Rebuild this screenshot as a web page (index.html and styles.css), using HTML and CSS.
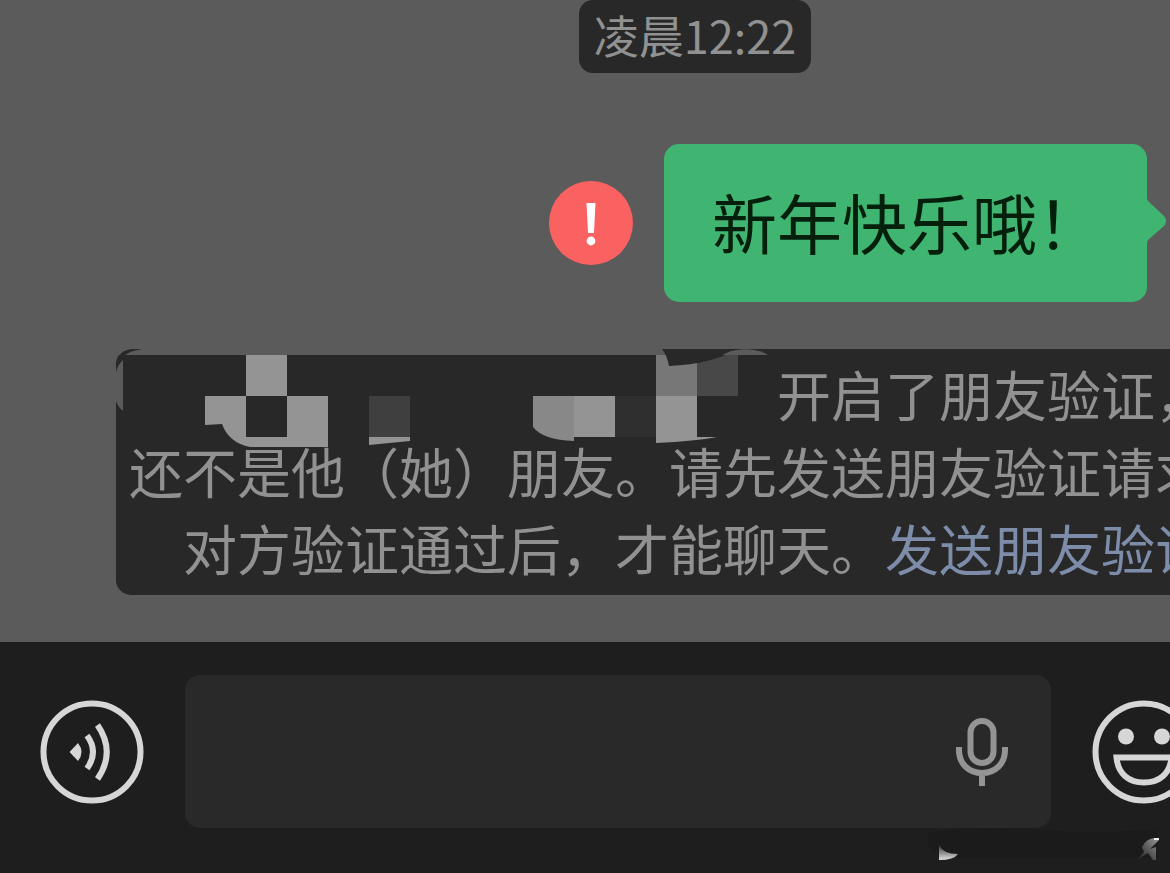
FILE: index.html
```html
<!DOCTYPE html>
<html lang="zh-CN">
<head>
<meta charset="utf-8">
<meta name="viewport" content="width=device-width, initial-scale=1">
<title>聊天</title>
<link rel="stylesheet" href="styles.css">
</head>
<body>
<main class="chat">
  <time class="stamp">凌晨12:22</time>

  <section class="message">
    <button class="retry" type="button" aria-label="重新发送">
      <svg viewBox="0 0 84 84" aria-hidden="true">
        <circle cx="42" cy="42" r="42" fill="#fa6262"/>
        <path d="M37.500 22h9l-1.500 30h-6z" fill="#fff"/>
        <circle cx="42" cy="60" r="4.400" fill="#fff"/>
      </svg>
    </button>
    <p class="bubble">新年快乐哦！
      <svg class="tail" viewBox="0 0 20 48" aria-hidden="true"><path d="M0 1L1 3L17 18Q21 23 17 28L1 42L0 45z" fill="#40b572"/></svg>
    </p>
  </section>

  <section class="notice">
    <svg class="mosaic" viewBox="0 0 660 96" aria-hidden="true">
      <path d="M14 0H546L552 6H0V0z" fill="#5b5b5b"/>
      <path d="M0 18Q1 0 18 0L26 0Q14 2 9 6L7 10Q2 15 0 24z" fill="#282828"/>
      <path d="M0 23Q2 15 7 11V62Q2 58 0 52z" fill="#5b5b5b"/>
      <path d="M130 6h41v41h41v51L134 98Q113 94 106 75L89 76V47h41z" fill="#949494"/>
      <path d="M130 47h41v41h-41z" fill="#282828"/>
      <path d="M253 47h41v41h-41z" fill="#3f3f3f"/>
      <path d="M253 88h41v4l-41 4z" fill="#949494"/>
      <path d="M417 47h41v45Q427 91 417 78z" fill="#888"/>
      <path d="M458 47h41v41h-41z" fill="#949494"/>
      <path d="M499 47h41v41h-41z" fill="#2f2f2f"/>
      <path d="M540 6h41v41h-41z" fill="#777"/>
      <path d="M581 6h41v41h-41z" fill="#484848"/>
      <path d="M540 47h41v41h20Q580 92 540 94z" fill="#949494"/>
      <path d="M546 0h76Q596 15 553 17Q551 6 546 0z" fill="#282828"/>
      <path d="M615 2Q637-3 652 6H606z" fill="#5b5b5b"/>
    </svg>
    <p class="lines">
      <span class="line"><span class="name"></span>开启了朋友验证，你</span>
      <span class="line">还不是他（她）朋友。请先发送朋友验证请求，</span>
      <span class="line">对方验证通过后，才能聊天。<a class="link" href="#verify">发送朋友验证</a></span>
    </p>
  </section>
</main>

<footer class="bar">
  <button class="round" type="button" aria-label="语音">
    <svg viewBox="0 0 104 104" fill="none" stroke="#d6d6d6" stroke-width="6" aria-hidden="true">
      <circle cx="52" cy="52" r="48.500"/>
      <path d="M29.500 52L38 43Q45 52 38 61z" fill="#d6d6d6" stroke="none"/>
      <path d="M47 35.500Q59 52 47 68.500"/>
      <path d="M57.500 25Q76 52 57.500 79"/>
    </svg>
  </button>
  <div class="field">
    <input class="text" type="text" aria-label="消息">
    <button class="mic" type="button" aria-label="语音输入">
      <svg viewBox="0 0 52 70" fill="none" stroke="#949494" stroke-width="6" aria-hidden="true">
        <rect x="14.500" y="4" width="23" height="42" rx="11.500"/>
        <path d="M3 30v3c0 14 10 23 23 23s23-9 23-23v-3M26 56v13"/>
      </svg>
    </button>
  </div>
  <button class="round" type="button" aria-label="表情">
    <svg viewBox="0 0 104 104" fill="none" stroke="#d6d6d6" stroke-width="6" aria-hidden="true">
      <circle cx="52" cy="52" r="48.500"/>
      <circle cx="34" cy="36.500" r="8" fill="#d6d6d6" stroke="none"/>
      <circle cx="70" cy="36.500" r="8" fill="#d6d6d6" stroke="none"/>
      <path d="M24.500 57.500h55C78 74 67 82.500 52 82.500S26 74 24.500 57.500z"/>
    </svg>
  </button>
  <svg class="smudge" viewBox="0 0 250 48" aria-hidden="true">
    <defs>
      <linearGradient id="glow" x1="0" y1="0" x2="0" y2="1"><stop offset="0" stop-color="#333"/><stop offset="1" stop-color="#e0e0e0"/></linearGradient>
      <linearGradient id="glint" x1="0" y1="1" x2="1" y2="0"><stop offset="0" stop-color="#1e1e1e"/><stop offset="1" stop-color="#999"/></linearGradient>
    </defs>
    <path d="M8 8Q60 0 120 5T238 4V33H40Q4 34 8 8z" fill="#1b1b1b"/>
    <path d="M19 20Q23 29 38 29Q34 35 19 35z" fill="url(#glow)"/>
    <path d="M222 22Q226 14 234 13L239 15L230 24L236 22V35H233L228 28L217 35L224 27z" fill="url(#glint)"/>
    <path d="M234 13h5v2h-5z" fill="#eee"/>
  </svg>
</footer>
</body>
</html>
```
FILE: styles.css
```css
* {
  box-sizing: border-box;
}

body {
  margin: 0;
  min-height: 100vh;
  display: flex;
  flex-direction: column;
  overflow: hidden;
  background: #5b5b5b;
  color: #919191;
  font-family: "Noto Sans CJK SC", sans-serif;
  font-weight: 400;
}

button {
  flex: none;
  padding: 0;
  border: 0;
  background: none;
}

svg {
  display: block;
}

.chat {
  flex: 1;
  display: flex;
  flex-direction: column;
  padding-left: 116px;
}

.stamp {
  align-self: center;
  margin-left: 104px;
  padding: 0 15px 4px;
  border-radius: 14px;
  background: #282828;
  font-size: 45px;
  line-height: 69px;
}

.message {
  display: flex;
  align-items: center;
  justify-content: flex-end;
  gap: 31px;
  margin-top: 71px;
  padding-right: 23px;
}

.retry {
  width: 84px;
}

.bubble {
  position: relative;
  margin: 0;
  padding: 29px 45px 33px 48px;
  border-radius: 15px;
  background: #40b572;
  color: #041f0b;
  font-size: 65px;
  line-height: 96px;
}

.tail {
  position: absolute;
  left: 100%;
  top: 54px;
  width: 20px;
}

.notice {
  position: relative;
  margin: 47px -106px 47px 0;
  padding: 6px 0 9px;
  border-radius: 15px;
  background: #282828;
}

.mosaic {
  position: absolute;
  left: 0;
  top: 0;
  width: 660px;
  overflow: visible;
}

.lines {
  position: relative;
  margin: 0;
  font-size: 54px;
  line-height: 77px;
  text-align: center;
}

.line {
  display: block;
  white-space: nowrap;
}

.name {
  display: inline-block;
  width: 12em;
}

.link {
  color: #7c8ca9;
  text-decoration: none;
}

.bar {
  position: relative;
  display: flex;
  align-items: center;
  gap: 41px;
  padding: 33px 0 45px 40px;
  margin-right: -26px;
  background: #1e1e1e;
}

.round {
  width: 104px;
}

.field {
  flex: 1;
  display: flex;
  align-items: center;
  padding-right: 43px;
  border-radius: 15px;
  background: #292929;
}

.text {
  flex: 1;
  min-width: 0;
  height: 153px;
  padding: 0 32px;
  border: 0;
  outline: 0;
  background: none;
  color: #d6d6d6;
  font: inherit;
  font-size: 54px;
}

.mic {
  width: 52px;
}

.smudge {
  position: absolute;
  right: 26px;
  bottom: 0;
  width: 250px;
}
```
